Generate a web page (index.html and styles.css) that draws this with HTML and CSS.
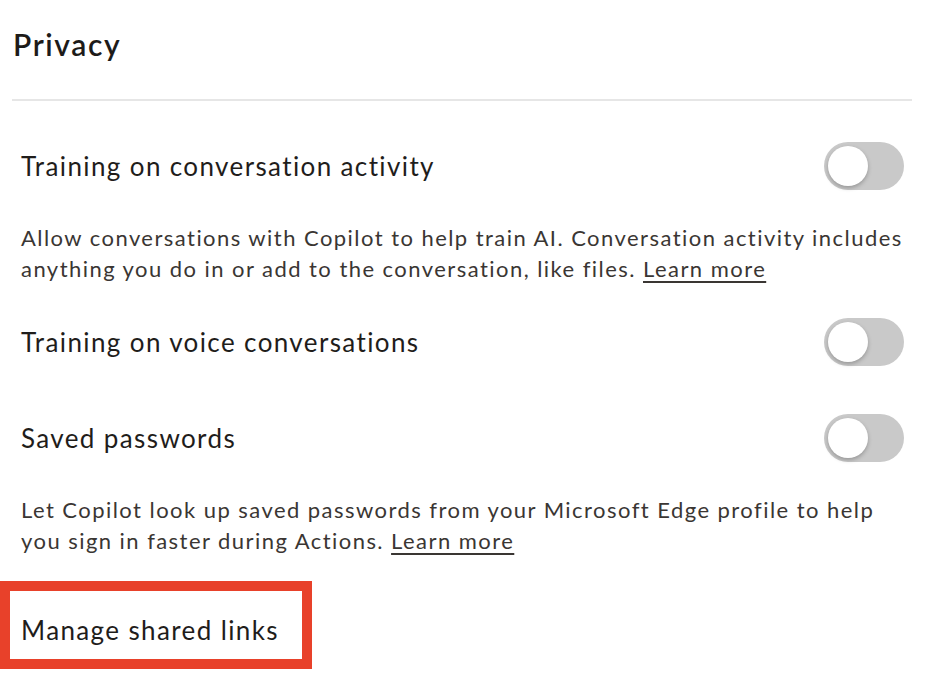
FILE: index.html
```html
<!DOCTYPE html>
<html lang="en">
<head>
<meta charset="utf-8">
<title>Privacy</title>
<link rel="stylesheet" href="styles.css">
</head>
<body>
<main class="panel">
  <h1 class="title">Privacy</h1>
  <hr class="divider">
  <section class="setting">
    <div class="row">
      <span class="label">Training on conversation activity</span>
      <span class="toggle"><span class="knob"></span></span>
    </div>
    <p class="desc">Allow conversations with Copilot to help train AI. Conversation activity includes<br>anything you do in or add to the conversation, like files. <a class="link" href="#">Learn more</a></p>
  </section>
  <section class="setting setting-after-desc">
    <div class="row">
      <span class="label">Training on voice conversations</span>
      <span class="toggle"><span class="knob"></span></span>
    </div>
  </section>
  <section class="setting setting-gap">
    <div class="row">
      <span class="label">Saved passwords</span>
      <span class="toggle"><span class="knob"></span></span>
    </div>
    <p class="desc">Let Copilot look up saved passwords from your Microsoft Edge profile to help<br>you sign in faster during Actions. <a class="link" href="#">Learn more</a></p>
  </section>
  <div class="manage">
    <span class="label">Manage shared links</span>
  </div>
</main>
</body>
</html>
```
FILE: styles.css
```css
html, body {
  margin: 0;
  padding: 0;
  background: #ffffff;
}
body {
  font-family: Lato, "Open Sans", "Liberation Sans", sans-serif;
  color: #1d1b19;
}
.panel {
  width: 900px;
  padding: 24px 0 0 12px;
}
.title {
  margin: 0 0 0 1px;
  font-size: 30px;
  font-weight: 600;
  line-height: 40px;
  letter-spacing: 1.6px;
}
.divider {
  border: none;
  height: 2px;
  background: #e6e6e6;
  margin: 35px 0 0 0;
}
.setting {
  padding: 0 8px 0 9px;
}
.row {
  display: flex;
  align-items: center;
  justify-content: space-between;
  height: 48px;
  margin-top: 41px;
}
.setting-after-desc .row {
  margin-top: 34px;
}
.setting-gap .row {
  margin-top: 48px;
}
.label {
  font-size: 26px;
  font-weight: 400;
  color: #1f1d1b;
  letter-spacing: 1.38px;
  white-space: nowrap;
}
.toggle {
  width: 80px;
  height: 48px;
  border-radius: 24px;
  background: #c9c9c9;
  display: flex;
  align-items: center;
  padding-left: 4px;
  box-sizing: border-box;
}
.knob {
  width: 40px;
  height: 40px;
  border-radius: 50%;
  background: #ffffff;
  box-shadow: 0 2px 4px rgba(0,0,0,0.25);
}
.desc {
  margin: 32px 0 0 0;
  font-size: 22px;
  line-height: 31px;
  color: #3a3633;
  letter-spacing: 1.45px;
  white-space: nowrap;
}
.link {
  color: #3a3633;
  text-decoration: underline;
  text-underline-offset: 4px;
}
.manage {
  box-sizing: border-box;
  margin-top: 25px;
  margin-left: -12px;
  width: 312px;
  height: 88px;
  border: 10px solid #e8412a;
  display: flex;
  align-items: center;
  padding-left: 11px;
  padding-top: 9px;
}
```
